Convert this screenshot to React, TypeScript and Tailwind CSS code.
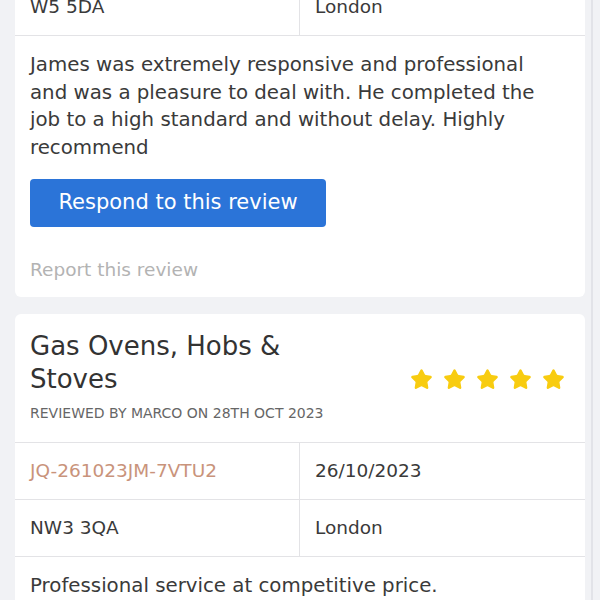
import { Star } from "lucide-react";

type Row = [string, string, boolean?];

function Cells({ rows }: { rows: Row[] }) {
  return (
    <div className="flex flex-col">
      {rows.map(([a, b, accent], i) => (
        <div key={i} className="grid h-[57px] grid-cols-2 border-b border-[#e3e3e6] text-[18.5px]">
          <div className={`flex items-center border-r border-[#e3e3e6] pl-[15px] ${accent ? "text-[#c9937b]" : "text-[#3a3a3a]"}`}>
            {a}
          </div>
          <div className="flex items-center pl-[15px] text-[#3a3a3a]">{b}</div>
        </div>
      ))}
    </div>
  );
}

export default function App() {
  return (
    <div
      className="relative h-[600px] w-[600px] overflow-hidden bg-[#f1f2f5]"
      style={{ fontFamily: '"DejaVu Sans", "Open Sans", sans-serif' }}
    >
      <div className="absolute right-[7px] top-0 h-full w-[2px] bg-[#e2e3e8]" />
      <div className="mt-[-21px] flex flex-col gap-[17px] px-[15px]">
        {/* First card (top cut off) */}
        <div className="rounded-b-[6px] bg-white">
          <Cells rows={[["W5 5DA", "London"]]} />
          <div className="px-[15px] pt-[15px] pb-[14px]">
            <p className="text-[19.8px] leading-[27.7px] text-[#3a3a3a]">
              James was extremely responsive and professional
              <br />
              and was a pleasure to deal with. He completed the
              <br />
              job to a high standard and without delay. Highly
              <br />
              recommend
            </p>
            <button className="mt-[17px] h-[48px] w-[296px] rounded-[4px] bg-[#2b74d8] text-[21px] text-white">
              Respond to this review
            </button>
            <div className="mt-[30px] text-[18.5px] leading-[26px] text-[#b3b3b3]">Report this review</div>
          </div>
        </div>

        {/* Second card */}
        <div className="rounded-t-[6px] bg-white">
          <div className="flex items-center justify-between border-b border-[#e3e3e6] px-[15px] pt-[16px] pb-[19px]">
            <div>
              <h2 className="w-[300px] text-[26px] leading-[33px] text-[#333]">
                Gas Ovens, Hobs &amp; Stoves
              </h2>
              <div className="mt-[7px] text-[14px] leading-[20px] uppercase text-[#666]">
                Reviewed by Marco on 28th Oct 2023
              </div>
            </div>
            <div className="mr-[5px] mt-[6px] flex gap-[10px]">
              {[0, 1, 2, 3, 4].map((i) => (
                <Star key={i} size={23} fill="#f8cc10" stroke="#f8cc10" strokeWidth={1.5} />
              ))}
            </div>
          </div>
          <Cells rows={[["JQ-261023JM-7VTU2", "26/10/2023", true], ["NW3 3QA", "London"]]} />
          <div className="px-[15px] pt-[15px]">
            <p className="text-[19.8px] leading-[27.7px] text-[#3a3a3a]">
              Professional service at competitive price.
            </p>
          </div>
        </div>
      </div>
    </div>
  );
}
